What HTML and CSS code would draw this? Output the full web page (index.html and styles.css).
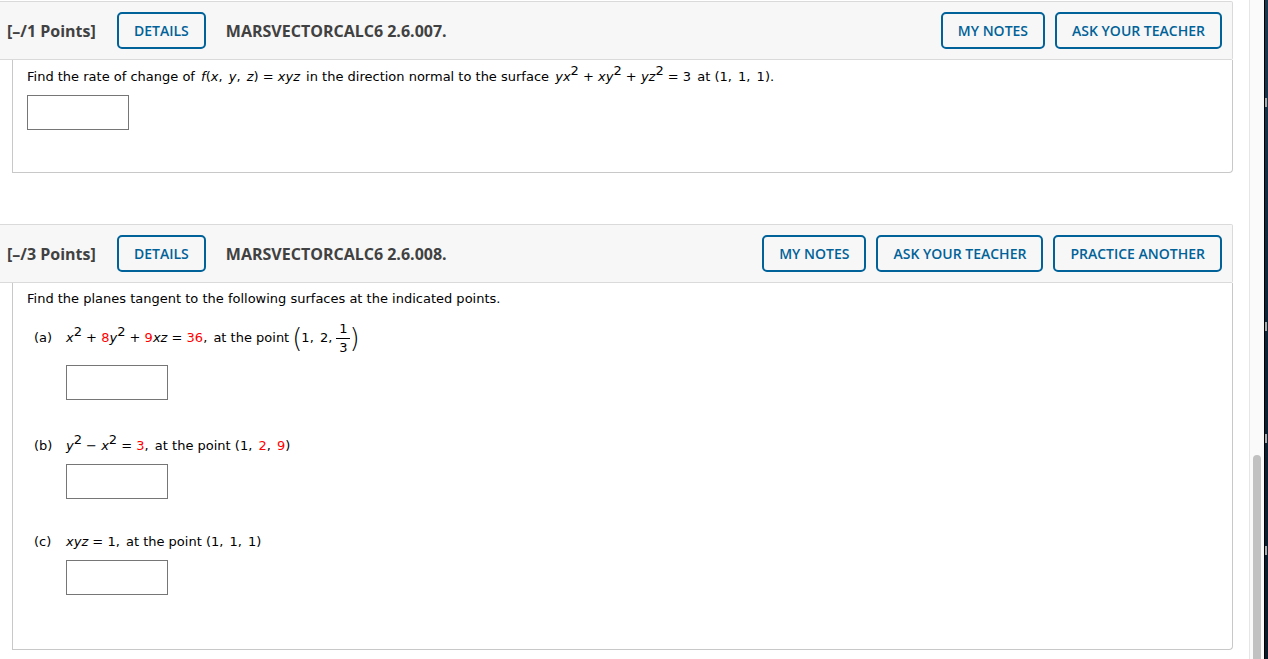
FILE: index.html
```html
<!DOCTYPE html>
<html lang="en">
<head>
<meta charset="utf-8">
<title>Assignment</title>
<link rel="stylesheet" href="styles.css">
</head>
<body>
<div class="page">
  <main class="content">
    <section class="question">
      <header class="bar">
        <h2 class="points">[–/1 Points]</h2>
        <button class="btn" type="button">DETAILS</button>
        <h3 class="code">MARSVECTORCALC6 2.6.007.</h3>
        <div class="actions">
          <button class="btn" type="button">MY NOTES</button>
          <button class="btn" type="button">ASK YOUR TEACHER</button>
        </div>
      </header>
      <div class="body">
        <label class="line" for="q7">Find the rate of change of <span class="math"><i>f</i>(<i>x</i><span class="comma">,</span> <i>y</i><span class="comma">,</span> <i>z</i>) = <i>xyz</i></span> in the direction normal to the surface <span class="math"><i>yx</i><sup>2</sup> + <i>xy</i><sup>2</sup> + <i>yz</i><sup>2</sup> = 3</span> at (1<span class="comma">,</span> 1<span class="comma">,</span> 1).</label>
        <input class="answer" id="q7" type="text">
      </div>
    </section>

    <section class="question">
      <header class="bar">
        <h2 class="points">[–/3 Points]</h2>
        <button class="btn" type="button">DETAILS</button>
        <h3 class="code">MARSVECTORCALC6 2.6.008.</h3>
        <div class="actions">
          <button class="btn" type="button">MY NOTES</button>
          <button class="btn" type="button">ASK YOUR TEACHER</button>
          <button class="btn" type="button">PRACTICE ANOTHER</button>
        </div>
      </header>
      <div class="body">
        <p class="line">Find the planes tangent to the following surfaces at the indicated points.</p>
        <div class="parts">
          <div class="part part-tall">
            <span class="letter">(a)</span>
            <label class="line tall" for="q8a"><span><i>x</i><sup>2</sup> + <b class="num">8</b><i>y</i><sup>2</sup> + <b class="num">9</b><i>xz</i> = <b class="num">36</b><span class="comma">,</span> at the point&nbsp;</span><span class="paren">(</span><span>1<span class="comma">,</span> 2,&nbsp;</span><span class="frac"><span class="top">1</span><span>3</span></span><span class="paren">)</span></label>
            <input class="answer" id="q8a" type="text">
          </div>
          <div class="part">
            <span class="letter">(b)</span>
            <label class="line" for="q8b"><i>y</i><sup>2</sup> − <i>x</i><sup>2</sup> = <b class="num">3</b><span class="comma">,</span> at the point (1<span class="comma">,</span> <b class="num">2</b><span class="comma">,</span> <b class="num">9</b>)</label>
            <input class="answer" id="q8b" type="text">
          </div>
          <div class="part">
            <span class="letter">(c)</span>
            <label class="line" for="q8c"><i>xyz</i> = 1<span class="comma">,</span> at the point (1<span class="comma">,</span> 1<span class="comma">,</span> 1)</label>
            <input class="answer" id="q8c" type="text">
          </div>
        </div>
      </div>
    </section>
  </main>
  <div class="track"><div class="thumb"></div></div>
  <div class="edge"><span class="tick"></span><span class="tick"></span><span class="tick"></span><span class="tick"></span><span class="tick"></span></div>
</div>
</body>
</html>
```
FILE: styles.css
```css
* { box-sizing: border-box; }
body {
  margin: 0;
  background: #fff;
  color: #000;
  font: 13px/20px Verdana, "DejaVu Sans", sans-serif;
}
.page { display: flex; min-height: 100vh; }
.content { flex: 1; padding: 1px 16px 9px 0; }
.question + .question { margin-top: 51px; }
.bar {
  display: flex;
  align-items: center;
  padding: 10px 10px 10px 7px;
  background: #f7f7f7;
  border: 1px solid #dadada;
  border-left: 0;
  border-radius: 0 2px 2px 0;
}
.points, .code {
  margin: 0;
  color: #414141;
  font: 700 16px/22px "Open Sans", sans-serif;
}
.points { width: 110px; }
.code { margin-left: 20px; }
.btn {
  height: 37px;
  padding: 0 15px;
  border: 2px solid #006298;
  border-radius: 5px;
  background: transparent;
  color: #006298;
  font: 600 14px/20px "Open Sans", sans-serif;
  cursor: pointer;
}
.actions { display: flex; gap: 10px; margin-left: auto; }
.body {
  margin-left: 12px;
  padding: 7px 14px 42px;
  border: 1px solid #c8c8c8;
  border-top: 0;
  border-radius: 0 0 4px 0;
}
.question:last-child .body { padding: 6px 14px 54px; }
.line { display: block; margin: 0; }
.line sup { font-size: 13px; line-height: 0; vertical-align: 6px; }
.math { margin: 0 2px; }
.comma { margin-right: 2px; }
.answer {
  display: block;
  width: 102px;
  height: 35px;
  margin-top: 8px;
  border: 1px solid #767676;
  background: #fff;
  font: inherit;
}
.parts { display: flex; flex-direction: column; gap: 33px; padding: 10px 0 0 7px; }
.part { display: grid; grid-template-columns: 32px 1fr; align-items: center; }
.part-tall { margin-bottom: 3px; }
.part .answer { grid-column: 2; }
.num { color: #f00; font-weight: 400; }
.tall { display: flex; align-items: center; height: 38px; }
.paren { font: 200 26px/38px "DejaVu Sans", "DejaVu Sans Light", sans-serif; width: 8px; display: flex; justify-content: center; }
.frac { display: flex; flex-direction: column; text-align: center; }
.frac span { width: 14px; line-height: 18px; }
.frac .top { border-bottom: 1px solid #000; }
.track {
  display: flex;
  flex-direction: column;
  align-items: center;
  justify-content: flex-end;
  width: 15px;
  background: #fafafa;
  border-left: 1px solid #e6e6e6;
}
.thumb { width: 8px; height: 31%; border-radius: 4px 4px 0 0; background: #c1c1c1; }
.edge {
  display: flex;
  flex-direction: column;
  gap: 103px;
  width: 4px;
  padding-top: 98px;
  background: linear-gradient(#1b3a52, #0b2438 50%, #081a29);
  border-left: 1px solid #000;
}
.tick { width: 2px; height: 9px; background: #aaa; }
.tick:nth-child(2) { visibility: hidden; }
```
